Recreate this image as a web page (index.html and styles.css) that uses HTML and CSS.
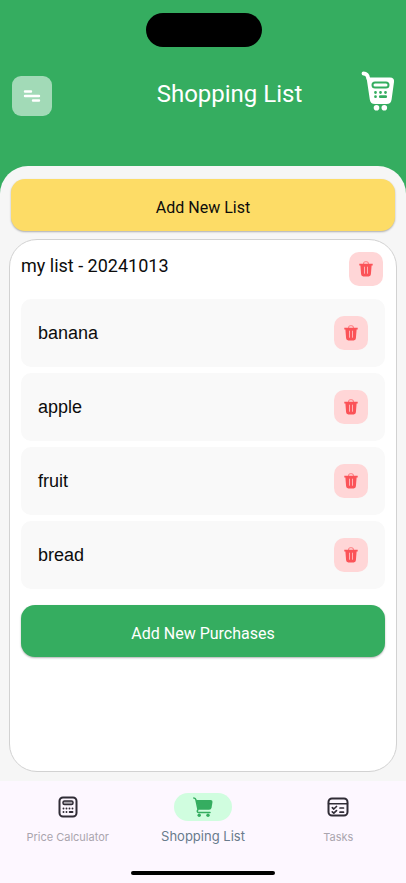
FILE: index.html
```html
<!DOCTYPE html>
<html lang="en">
<head>
<meta charset="utf-8">
<meta name="viewport" content="width=device-width, initial-scale=1">
<title>Shopping List</title>
<link rel="stylesheet" href="styles.css">
</head>
<body>
<svg class="sprite" aria-hidden="true">
  <symbol id="trash" viewBox="0 0 14 16">
    <path d="M4.600 3V2.400A1.600 1.600 0 0 1 6.200.8h1.600a1.600 1.600 0 0 1 1.600 1.600V3" fill="none" stroke="#ff8084" stroke-width="1.100"/>
    <path d="M.3 2.700h13.400v1.700h-1.100l-.7 8.900a2.200 2.200 0 0 1-2.200 2.100H4.300a2.200 2.200 0 0 1-2.200-2.100L1.400 4.400H.3z" fill="#fb5358"/>
    <path d="M5.500 5.700v7M8.500 5.700v7" stroke="#ffb0b3" stroke-width="1"/>
  </symbol>
</svg>
<div class="app">
  <header class="header">
    <div class="island"></div>
    <div class="bar">
      <button class="menu" type="button" aria-label="Menu">
        <svg width="18" height="14" viewBox="0 0 18 14" fill="none" stroke="#fff" stroke-width="2.400" stroke-linecap="round"><path d="M2 2.500h6M2 7h14M10 11.500h6"/></svg>
      </button>
      <h1 class="title">Shopping List</h1>
      <svg class="logo" width="34" height="40" viewBox="0 0 34 40" aria-hidden="true">
        <path d="M2.500 2.500c3.200 0 4.300 1.500 4.800 5" fill="none" stroke="#fff" stroke-width="3.800" stroke-linecap="round"/>
        <path d="M5.500 6.500h23.500q4.600 0 4 4.500l-2.400 17.500q-.6 4.500-5 4.500H14q-4.600 0-5.200-4.500z" fill="#fff"/>
        <rect x="11.500" y="11.500" width="16" height="5" rx="2.500" fill="#fff" stroke="#35ad60" stroke-width="2"/>
        <path d="M14.500 21.500h.01M19.500 21.500h.01M24.500 21.500h.01M14.500 25.700h.01M19.300 25.700h5.400" stroke="#35ad60" stroke-width="2.800" stroke-linecap="round"/>
        <circle cx="15.500" cy="36.800" r="2.800" fill="#fff"/><circle cx="23.300" cy="36.800" r="2.800" fill="#fff"/>
      </svg>
    </div>
  </header>
  <main class="sheet">
    <button class="action action-list" type="button">Add New List</button>
    <section class="card">
      <div class="card-head">
        <h2 class="list-name">my list - 20241013</h2>
        <button class="delete" type="button" aria-label="Delete list"><svg width="14" height="16"><use href="#trash"/></svg></button>
      </div>
      <ul class="items">
        <li class="item"><span>banana</span><button class="delete" type="button" aria-label="Delete banana"><svg width="14" height="16"><use href="#trash"/></svg></button></li>
        <li class="item"><span>apple</span><button class="delete" type="button" aria-label="Delete apple"><svg width="14" height="16"><use href="#trash"/></svg></button></li>
        <li class="item"><span>fruit</span><button class="delete" type="button" aria-label="Delete fruit"><svg width="14" height="16"><use href="#trash"/></svg></button></li>
        <li class="item"><span>bread</span><button class="delete" type="button" aria-label="Delete bread"><svg width="14" height="16"><use href="#trash"/></svg></button></li>
      </ul>
      <button class="action action-purchase" type="button">Add New Purchases</button>
    </section>
  </main>
  <nav class="tabs">
    <a class="tab" href="#calculator">
      <span class="pill"><svg width="20" height="22" viewBox="0 0 20 22" fill="none" stroke="#302c36">
        <rect x="1.500" y="1.500" width="17" height="19" rx="3.500" stroke-width="2"/>
        <rect x="5" y="5" width="10" height="3.500" rx="1.500" fill="#aaa6ae" stroke-width="1.500"/>
        <path d="M5.500 12.500h.01M8.500 12.500h.01M11.500 12.500h.01M14.500 12.500h.01M5.500 16h.01M8.500 16h.01M11.700 16h2.800" stroke-width="1.900" stroke-linecap="round"/>
      </svg></span>
      <span>Price Calculator</span>
    </a>
    <a class="tab tab-active" href="#shopping" aria-current="page">
      <span class="pill"><svg width="20" height="20" viewBox="0 0 20 20" fill="none" stroke="#35ad60">
        <path d="M.8 1q1.700 0 2.200 2l2 9.500c-1.500 2-.6 3 1 3h11" stroke-width="1.500" stroke-linecap="round"/>
        <path d="M3.200 3h14.300q2.300 0 2 2l-.9 5.500q-.4 2.300-2.500 2.300H5.200z" fill="#35ad60" stroke="none"/>
        <circle cx="6.200" cy="18.200" r="1.700" fill="#35ad60" stroke="none"/><circle cx="15" cy="18.200" r="1.700" fill="#35ad60" stroke="none"/>
      </svg></span>
      <span>Shopping List</span>
    </a>
    <a class="tab" href="#tasks">
      <span class="pill"><svg width="22" height="20" viewBox="0 0 22 20" fill="none" stroke="#302c36" stroke-linecap="round" stroke-linejoin="round">
        <rect x="1.500" y="1.500" width="19" height="17" rx="3.500" stroke-width="2"/>
        <path d="M1.500 6.800h19" stroke-width="1.500"/>
        <path d="M5.300 10.700l1.500 1.300 2.700-2.500M5.300 14.900l1.500 1.300 2.700-2.500M13 11h3.500M13 15.200h3.500" stroke-width="1.700"/>
      </svg></span>
      <span>Tasks</span>
    </a>
  </nav>
  <div class="home"></div>
</div>
</body>
</html>
```
FILE: styles.css
```css
* { box-sizing: border-box; }
body { margin: 0; font-family: Roboto, "Liberation Sans", sans-serif; color: #0c0c0c; background: #35ad60; }
button { border: 0; padding: 0; font: inherit; cursor: pointer; }
h1, h2, ul { margin: 0; padding: 0; font-weight: 400; }
svg { display: block; }
.sprite { display: none; }
.app { min-height: 100vh; display: flex; flex-direction: column; }

.header { padding: 13px 11px 50px 12px; }
.island { width: 116px; height: 34px; margin: 0 auto 24px; border-radius: 17px; background: #000; }
.bar { display: grid; grid-template-columns: 40px 1fr 34px; align-items: start; }
.menu { display: grid; place-items: center; width: 40px; height: 40px; margin-top: 5px; border-radius: 9px; background: #a2dab7; }
.title { padding-left: 46px; margin-top: 7px; font-size: 24px; line-height: 32px; text-align: center; color: #fff; }

.sheet { flex: 1; display: flex; flex-direction: column; gap: 8px; padding: 13px 9px 9px; border-radius: 28px 28px 0 0; background: #f6f6f6; }
.action { height: 52px; padding-top: 4px; border-radius: 14px; font-size: 16px; box-shadow: 0 1px 2px rgba(0, 0, 0, .3); }
.action-list { margin: 0 2px; background: #fddc66; color: #0c0c0c; }
.action-purchase { margin-top: 16px; background: #35ad60; color: #fff; }
.card { flex: 1; display: flex; flex-direction: column; padding: 12px 11px; border: 1px solid #d2d2d2; border-radius: 28px; background: #fff; }
.card-head { display: flex; justify-content: space-between; align-items: flex-start; padding-right: 2px; }
.list-name { font-size: 18px; line-height: 28px; }
.delete { display: grid; place-items: center; width: 34px; height: 34px; border-radius: 10px; background: #ffd6d7; }
.items { display: flex; flex-direction: column; gap: 6px; margin-top: 13px; list-style: none; }
.item { display: flex; justify-content: space-between; align-items: center; height: 68px; padding: 0 17px; border-radius: 10px; background: #f9f9f9; font-family: "Liberation Sans", sans-serif; font-size: 18px; }

.tabs { display: grid; grid-template-columns: repeat(3, 1fr); padding-top: 12px; background: #fdf7ff; }
.tab { display: flex; flex-direction: column; align-items: center; gap: 7px; font-family: Inter, sans-serif; font-size: 11px; line-height: 18px; color: #aaa5ae; text-decoration: none; }
.pill { display: grid; place-items: center; width: 58px; height: 28px; border-radius: 14px; }
.tab-active { gap: 6px; font-size: 13px; color: #697b8c; }
.tab-active .pill { background: #d0fddf; }
.home { padding: 25px 0 8px; background: #fdf7ff; }
.home::after { content: ""; display: block; width: 144px; height: 4px; margin: 0 auto; border-radius: 2px; background: #000; }
```
